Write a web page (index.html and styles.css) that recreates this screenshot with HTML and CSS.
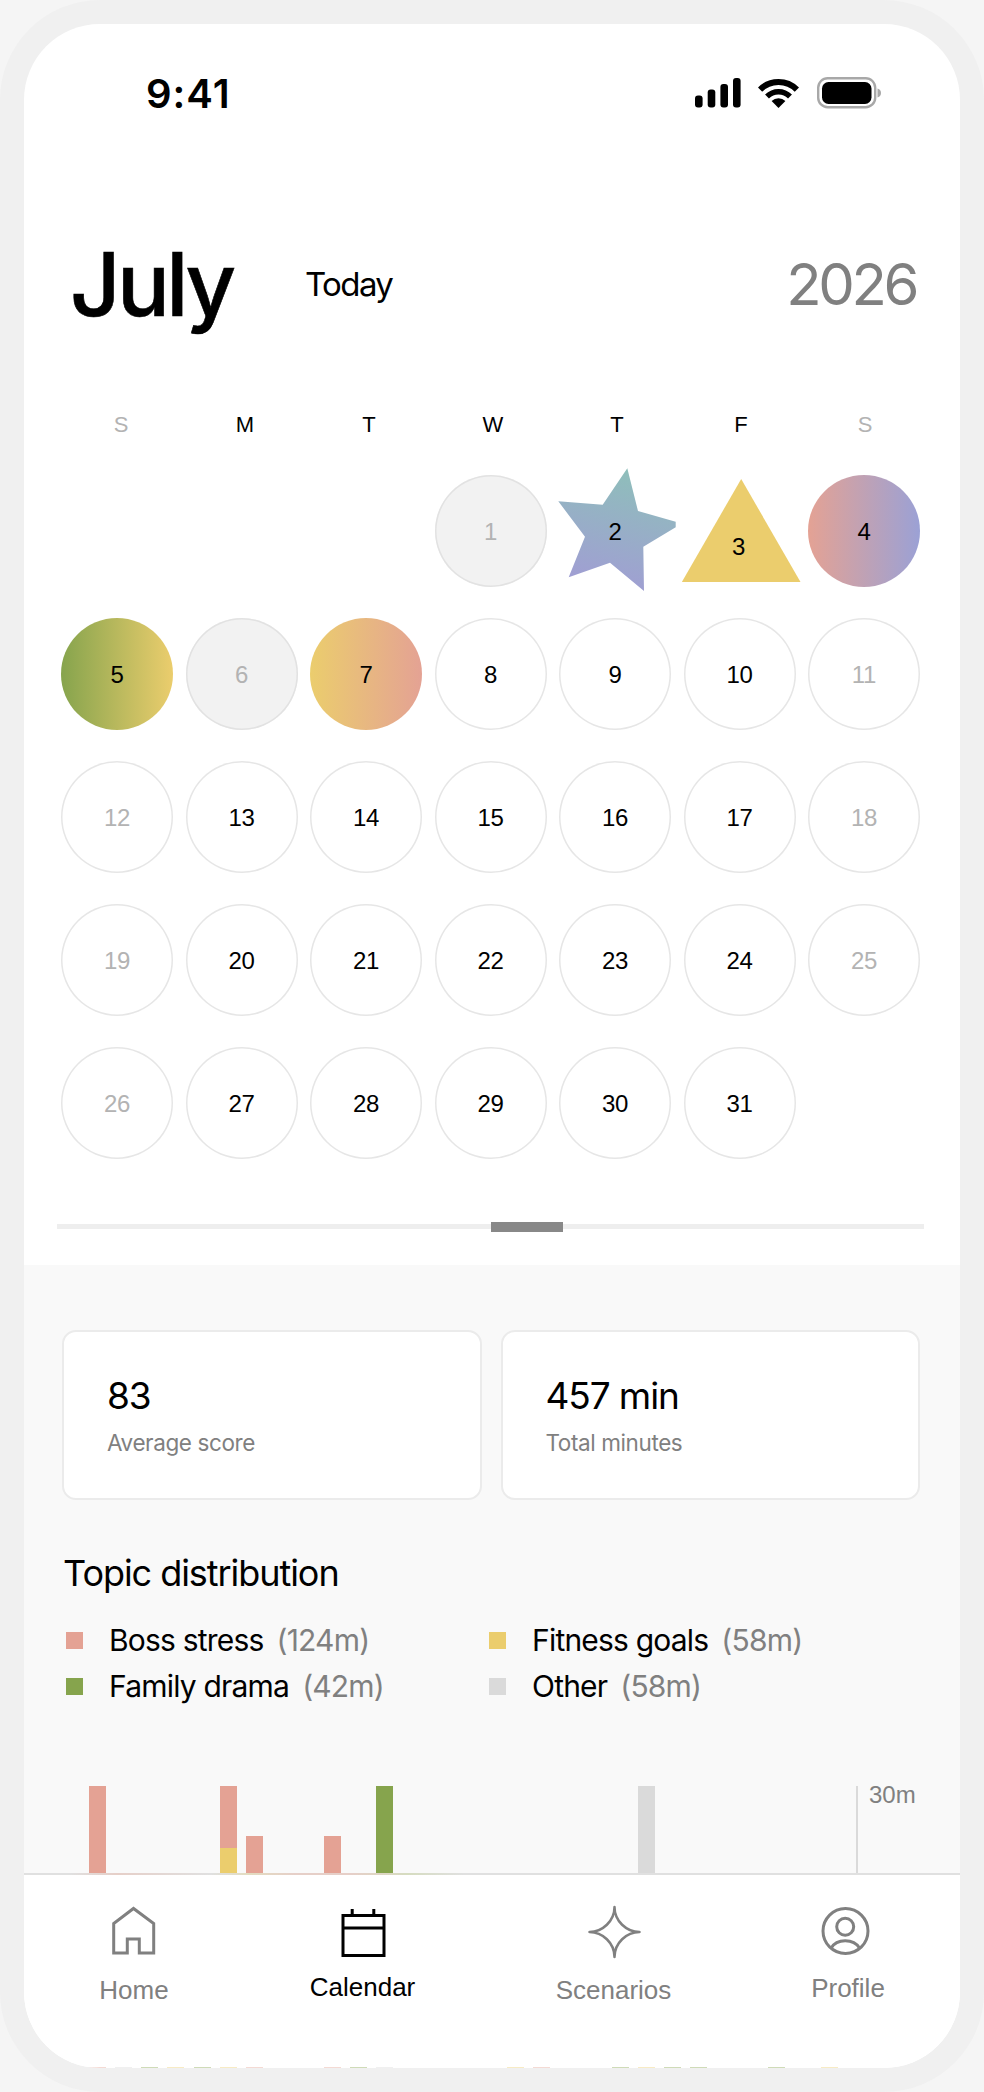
FILE: index.html
```html
<!DOCTYPE html>
<html lang="en">
<head>
    <meta charset="UTF-8" />
    <meta name="viewport" content="width=device-width, initial-scale=1.0" />
    <title>Calendar</title>
    <link rel="stylesheet" href="styles.css">
</head>
<body>
    <div class="phone">
        <div class="screen">
            <div class="status-bar">
                <span class="clock">9:41</span>
                <div class="status-icons">
                    <svg class="ic-signal" width="46" height="30" viewBox="0 0 46 30">
                        <rect x="0" y="17.5" width="7.6" height="12" rx="3" />
                        <rect x="12.7" y="11.5" width="7.6" height="18" rx="3" />
                        <rect x="25.4" y="6" width="7.6" height="23.5" rx="3" />
                        <rect x="38" y="0" width="7.6" height="29.5" rx="3" />
                    </svg>
                    <svg class="ic-wifi" width="41" height="30" viewBox="0 0 41 30">
                        <path d="M2.1 11.6A26 26 0 0 1 38.9 11.6" fill="none" stroke="#000" stroke-width="6" />
                        <path d="M9 18.5A16.25 16.25 0 0 1 32 18.5" fill="none" stroke="#000" stroke-width="5.5" />
                        <path d="M20.5 30L13.6 23.1A9.7 9.7 0 0 1 27.4 23.1Z" />
                    </svg>
                    <svg class="ic-battery" width="66" height="32" viewBox="0 0 66 32">
                        <rect x="2.2" y="1.2" width="57" height="29" rx="9.5" fill="none" stroke="#a8a8a8" stroke-width="2.4" />
                        <rect x="6" y="5" width="49.5" height="22" rx="6.5" />
                        <path d="M61.5 11.5C64 12 65 14 65 16C65 18 64 20 61.5 20.5Z" fill="#a8a8a8" />
                    </svg>
                </div>
            </div>

            <div class="month-head">
                <h1 class="month">July</h1>
                <span class="today">Today</span>
                <span class="year">2026</span>
            </div>

            <div class="weekdays">
                <span class="muted">S</span>
                <span>M</span>
                <span>T</span>
                <span>W</span>
                <span>T</span>
                <span>F</span>
                <span class="muted">S</span>
            </div>

            <div class="days">
                <div class="day-empty"></div>
                <div class="day-empty"></div>
                <div class="day-empty"></div>
                <div class="day filled muted">1</div>
                <div class="day-shape">
                    <svg class="shape" viewBox="-2 -8 120 126" width="120" height="126">
                        <defs>
                            <linearGradient id="star-fill" x1="0.62" y1="0" x2="0.38" y2="1">
                                <stop offset="0" stop-color="#8ebfba" />
                                <stop offset="1" stop-color="#a19dd4" />
                            </linearGradient>
                        </defs>
                        <path fill="url(#star-fill)" d="M68.3 -6.7L79 36L116.7 46.7V52.3L84.3 71.7L85 116L51 87.7L9.7 102.3L26 61.7L-0.7 26.3L43.7 29.7Z" />
                    </svg>
                    <span class="shape-num">2</span>
                </div>
                <div class="day-shape">
                    <svg class="shape shape-tri" viewBox="-2 0 120 112" width="120" height="112">
                        <path fill="#ebcd6d" d="M57.2 4L116.5 107H-2.2Z" />
                    </svg>
                    <span class="shape-num num-low">3</span>
                </div>
                <div class="day grad-pink-blue">4</div>

                <div class="day grad-green-yellow">5</div>
                <div class="day filled muted">6</div>
                <div class="day grad-yellow-pink">7</div>
                <div class="day">8</div>
                <div class="day">9</div>
                <div class="day">10</div>
                <div class="day muted">11</div>

                <div class="day muted">12</div>
                <div class="day">13</div>
                <div class="day">14</div>
                <div class="day">15</div>
                <div class="day">16</div>
                <div class="day">17</div>
                <div class="day muted">18</div>

                <div class="day muted">19</div>
                <div class="day">20</div>
                <div class="day">21</div>
                <div class="day">22</div>
                <div class="day">23</div>
                <div class="day">24</div>
                <div class="day muted">25</div>

                <div class="day muted">26</div>
                <div class="day">27</div>
                <div class="day">28</div>
                <div class="day">29</div>
                <div class="day">30</div>
                <div class="day">31</div>
            </div>

            <div class="scroll-track">
                <div class="scroll-thumb"></div>
            </div>

            <div class="summary">
                <div class="cards">
                    <div class="card">
                        <div class="card-value">83</div>
                        <div class="card-label">Average score</div>
                    </div>
                    <div class="card">
                        <div class="card-value">457 min</div>
                        <div class="card-label">Total minutes</div>
                    </div>
                </div>

                <h2 class="section-title">Topic distribution</h2>

                <div class="legend">
                    <div class="legend-item"><i class="swatch pink"></i><span>Boss stress</span><span class="mins">(124m)</span></div>
                    <div class="legend-item"><i class="swatch yellow"></i><span>Fitness goals</span><span class="mins">(58m)</span></div>
                    <div class="legend-item"><i class="swatch green"></i><span>Family drama</span><span class="mins">(42m)</span></div>
                    <div class="legend-item"><i class="swatch grey"></i><span>Other</span><span class="mins">(58m)</span></div>
                </div>

                <div class="chart">
                    <div class="slot"><div class="seg pink" style="height: 87px"></div></div>
                    <div class="slot"></div>
                    <div class="slot"></div>
                    <div class="slot"></div>
                    <div class="slot"></div>
                    <div class="slot"><div class="seg pink" style="height: 62px"></div><div class="seg yellow" style="height: 25px"></div></div>
                    <div class="slot"><div class="seg pink" style="height: 37px"></div></div>
                    <div class="slot"></div>
                    <div class="slot"></div>
                    <div class="slot"><div class="seg pink" style="height: 37px"></div></div>
                    <div class="slot"></div>
                    <div class="slot"><div class="seg green" style="height: 87px"></div></div>
                    <div class="slot"></div>
                    <div class="slot"></div>
                    <div class="slot"></div>
                    <div class="slot"></div>
                    <div class="slot"></div>
                    <div class="slot"></div>
                    <div class="slot"></div>
                    <div class="slot"></div>
                    <div class="slot"></div>
                    <div class="slot"><div class="seg grey" style="height: 87px"></div></div>
                    <div class="chart-axis"><span>30m</span></div>
                </div>
            </div>

            <nav class="tabbar">
                <div class="tab">
                    <svg class="tab-icon" viewBox="0 0 52 52">
                        <path d="M5.7 47V17.5L25.5 2.5L45.7 17.5V47H31.3V33H19.3V47Z" />
                    </svg>
                    <span class="tab-label">Home</span>
                </div>
                <div class="tab active">
                    <svg class="tab-icon" viewBox="0 0 52 52">
                        <path d="M6 9.5H47V49.5H6ZM6 22H47M15.2 3V9.5M36.8 3V9.5" />
                    </svg>
                    <span class="tab-label label-high">Calendar</span>
                </div>
                <div class="tab">
                    <svg class="tab-icon icon-thin" viewBox="0 0 52 52">
                        <path stroke-linejoin="round" d="M26.5 1C26.5 15 38.5 26 51.5 26C38.5 26 26.5 37 26.5 51C26.5 37 14.5 26 1.5 26C14.5 26 26.5 15 26.5 1Z" />
                    </svg>
                    <span class="tab-label">Scenarios</span>
                </div>
                <div class="tab">
                    <svg class="tab-icon" viewBox="0 0 52 52">
                        <circle cx="23.5" cy="25" r="22.5" />
                        <circle cx="23.2" cy="20.7" r="8.5" />
                        <path d="M9.2 42C12 37 17 34.7 23.2 34.7C29.4 34.7 34.5 37 37.5 42" />
                    </svg>
                    <span class="tab-label label-mid">Profile</span>
                </div>
            </nav>

            <!-- next chart row just shows below the tab bar -->
            <div class="peek">
                <i class="pink"></i><i class="grey"></i><i class="green"></i><i class="yellow"></i><i class="green"></i>
                <i class="yellow"></i><i class="pink"></i><i></i><i></i><i class="pink"></i>
                <i class="green"></i><i class="grey"></i><i></i><i></i><i></i>
                <i></i><i class="yellow"></i><i class="pink"></i><i></i><i></i>
                <i class="green"></i><i class="yellow"></i><i class="green"></i><i class="green"></i><i></i>
                <i></i><i class="green"></i><i></i><i class="yellow"></i>
            </div>
        </div>
    </div>
</body>
</html>
```

FILE: styles.css
```css
html, body {
    margin: 0;
    padding: 0;
}
body {
    font-family: Inter, "Liberation Sans", Arial, sans-serif;
    background-color: #f5f5f5;
    color: #000;
}
h1, h2 {
    margin: 0;
    font-weight: 400;
}
.phone {
    width: 984px;
    height: 2092px;
    box-sizing: border-box;
    padding: 24px;
    background-color: #f0f0f0;
    border-radius: 100px;
}
.screen {
    display: flex;
    flex-direction: column;
    height: 2044px;
    background-color: #fff;
    border-radius: 76px;
    overflow: hidden;
}

/* status bar */
.status-bar {
    display: flex;
    align-items: center;
    justify-content: space-between;
    flex: none;
    height: 138px;
    padding: 0 78px 0 122px;
}
.clock {
    font-size: 40px;
    font-weight: 600;
    letter-spacing: 1px;
}
.status-icons {
    display: flex;
    align-items: center;
    gap: 17px;
}

/* month header */
.month-head {
    display: flex;
    align-items: center;
    flex: none;
    height: 244px;
    padding: 0 44px 0 46px;
}
.month {
    width: 235px;
    font-size: 88px;
    font-weight: 500;
    letter-spacing: -3.6px;
    line-height: 1;
    -webkit-text-stroke: 0.6px #000;
}
.today {
    font-size: 33px;
    letter-spacing: -1.6px;
}
.year {
    margin-left: auto;
    font-size: 58px;
    letter-spacing: -3.4px;
    color: #808080;
}

/* calendar grid */
.weekdays,
.days {
    display: grid;
    flex: none;
    font-family: "Liberation Sans", Arial, sans-serif;
}
.weekdays {
    grid-template-columns: repeat(7, 112px);
    column-gap: 12px;
    height: 38px;
    margin-bottom: 31px;
    padding: 0 41px;
    font-size: 22px;
    line-height: 38px;
    text-align: center;
}
.days {
    grid-template-columns: repeat(7, 112px);
    column-gap: 12.5px;
    row-gap: 31px;
    padding: 0 37px;
}
.muted {
    color: #b3b3b3;
}
.day,
.day-shape {
    position: relative;
    display: flex;
    align-items: center;
    justify-content: center;
    box-sizing: border-box;
    width: 112px;
    height: 112px;
    padding-top: 2px;
    font-size: 24px;
    letter-spacing: -0.3px;
}
.day {
    border-radius: 50%;
    box-shadow: inset 0 0 0 1.5px #e6e6e6;
}
.day.filled {
    background-color: #f2f2f2;
    box-shadow: inset 0 0 0 1.5px #e2e2e2;
}
.grad-pink-blue,
.grad-green-yellow,
.grad-yellow-pink {
    box-shadow: none;
}
.grad-pink-blue {
    background: linear-gradient(90deg, #e4a294, #9ba1d5);
}
.grad-green-yellow {
    background: linear-gradient(90deg, #86a44d, #ebcd6d);
}
.grad-yellow-pink {
    background: linear-gradient(90deg, #ebcd6d, #e4a294);
}
.shape {
    position: absolute;
    left: -2px;
    top: -8px;
}
.shape-tri {
    top: 0;
}
.shape-num {
    position: relative;
}
.num-low {
    top: 15px;
    left: -1px;
}

/* scroll indicator under the month */
.scroll-track {
    position: relative;
    flex: none;
    height: 5px;
    margin: 65px 36px 36px 33px;
    background-color: #eee;
}
.scroll-thumb {
    position: absolute;
    left: 434px;
    top: -2px;
    width: 72px;
    height: 10px;
    background-color: #888;
}

/* summary */
.summary {
    flex: 1;
    min-height: 0;
    padding-top: 65px;
    background-color: #f9f9f9;
    overflow: hidden;
}
.cards {
    display: flex;
    gap: 19px;
    margin: 0 40px 0 38px;
}
.card {
    flex: 1;
    box-sizing: border-box;
    height: 170px;
    padding: 41px 0 0 43px;
    background-color: #fff;
    border: 2px solid #ebebeb;
    border-radius: 14px;
}
.card-value {
    font-size: 37px;
    letter-spacing: -1.1px;
    line-height: 46px;
}
.card-label {
    margin-top: 10px;
    font-size: 22.5px;
    letter-spacing: -0.4px;
    line-height: 28px;
    color: #808080;
}
.section-title {
    margin: 51px 0 0 39px;
    font-size: 36px;
    letter-spacing: -1.05px;
    line-height: 44px;
}
.legend {
    display: grid;
    grid-template-columns: 423px 1fr;
    margin: 22px 0 0 42px;
}
.legend-item {
    display: flex;
    align-items: center;
    height: 46px;
    font-size: 30px;
    letter-spacing: -0.8px;
}
.swatch {
    width: 17px;
    height: 17px;
    margin-right: 26px;
}
.mins {
    margin-left: 13px;
    color: #808080;
}
.pink {
    background-color: #e4a294;
}
.yellow {
    background-color: #ebcd6d;
}
.green {
    background-color: #86a44d;
}
.grey {
    background-color: #dadada;
}

/* chart */
.chart {
    position: relative;
    display: flex;
    gap: 9.14px;
    height: 87px;
    margin-top: 77px;
    padding-left: 65px;
}
.slot {
    display: flex;
    flex-direction: column;
    justify-content: flex-end;
    width: 17px;
}
.chart-axis {
    position: absolute;
    left: 832px;
    top: 0;
    width: 2px;
    height: 87px;
    background-color: #dadada;
}
.chart-axis span {
    position: absolute;
    left: 13px;
    top: -5px;
    font-family: "Liberation Sans", Arial, sans-serif;
    font-size: 24px;
    line-height: 28px;
    color: #808080;
}

/* tab bar */
.tabbar {
    display: grid;
    grid-template-columns: 220px 237px 265px 204px;
    flex: none;
    box-sizing: border-box;
    height: 194px;
    padding-top: 31px;
    background-color: #fff;
    border-top: 2px solid #e0e0e0;
    border-image: linear-gradient(90deg, #e0e0e0 5%, #e6cfc8 10%, #e0e0e0 20%, #e3dcc0 24%, #e6cfc8 29%, #e6cfc8 35%, #d6dcc0 41%, #e0e0e0 47%) 1;
    font-family: "Liberation Sans", Arial, sans-serif;
}
.tab {
    display: flex;
    flex-direction: column;
    align-items: center;
    color: #808080;
}
.tab.active {
    color: #000;
}
.tab-icon {
    width: 52px;
    height: 52px;
    overflow: visible;
    fill: none;
    stroke: currentColor;
    stroke-width: 3;
}
.icon-thin {
    stroke-width: 2.5;
}
.tab-label {
    margin-top: 17px;
    font-size: 26px;
    line-height: 30px;
}
.label-high {
    margin-top: 14px;
}
.label-mid {
    margin-top: 15px;
}
.peek {
    display: flex;
    gap: 9.14px;
    flex: none;
    height: 1px;
    padding-left: 65px;
    background-color: #fff;
}
.peek i {
    flex: none;
    width: 17px;
    opacity: 0.4;
}
```
